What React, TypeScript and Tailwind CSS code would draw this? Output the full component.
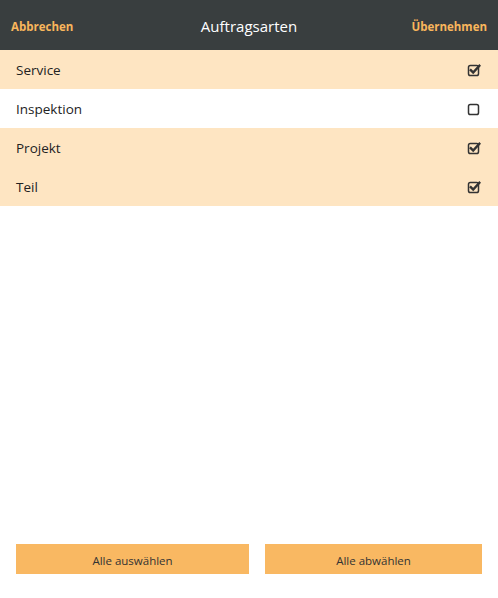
import React from "react";

const items = [
  { label: "Service", checked: true },
  { label: "Inspektion", checked: false },
  { label: "Projekt", checked: true },
  { label: "Teil", checked: true },
];

function Box({ checked }: { checked: boolean }) {
  return (
    <svg width="14" height="14" viewBox="0 0 14 14" className="block">
      <rect x="1.5" y="2.5" width="10" height="10" rx="1.8" fill="none" stroke="#333" strokeWidth="1.5" />
      {checked && (
        <path d="M3.8 7.2 L6.2 9.6 L12.4 2.8" fill="none" stroke="#333" strokeWidth="2.4" strokeLinecap="square" />
      )}
    </svg>
  );
}

export default function App() {
  return (
    <div
      className="w-[498px] h-[598px] bg-white flex flex-col"
      style={{ fontFamily: '"Open Sans", "Noto Sans", sans-serif' }}
    >
      <div className="h-[50px] bg-[#393e3f] flex items-center justify-between px-[11px] pt-[3px] relative">
        <span className="text-[11.5px] font-bold text-[#f9b65c]">Abbrechen</span>
        <span className="absolute left-0 right-0 text-center text-[15px] text-white pointer-events-none">
          Auftragsarten
        </span>
        <span className="text-[11.5px] font-bold text-[#f9b65c]">Übernehmen</span>
      </div>
      <div className="flex flex-col">
        {items.map((it) => (
          <div
            key={it.label}
            className={`h-[39px] flex items-center justify-between pl-4 pr-[17px] ${
              it.checked ? "bg-[#fee5c2]" : "bg-white"
            }`}
          >
            <span className="text-[13.5px] text-[#222] pt-[1px]">{it.label}</span>
            <Box checked={it.checked} />
          </div>
        ))}
      </div>
      <div className="flex-1" />
      <div className="flex gap-4 px-4 pb-[24px]">
        <button className="w-[233px] h-[30px] bg-[#f9b862] text-[11.5px] text-[#333] pt-[3px]">Alle auswählen</button>
        <button className="w-[217px] h-[30px] bg-[#f9b862] text-[11.5px] text-[#333] pt-[3px]">Alle abwählen</button>
      </div>
    </div>
  );
}
